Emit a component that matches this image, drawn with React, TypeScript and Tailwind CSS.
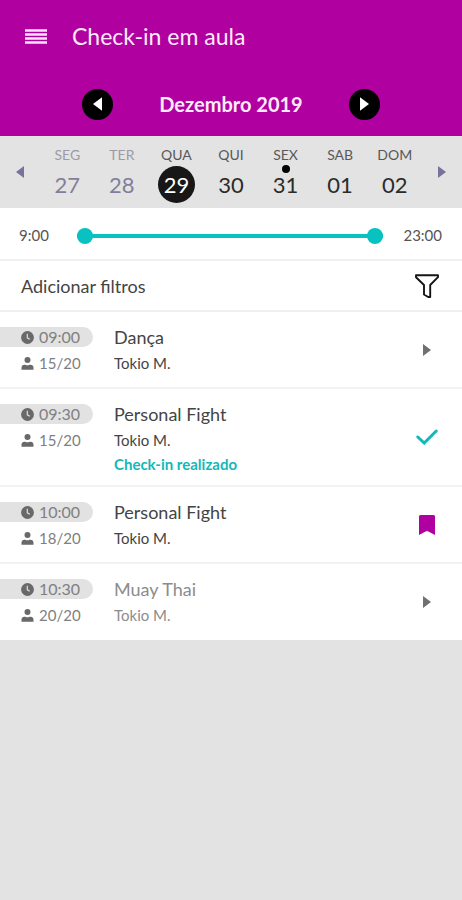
import React, { useState } from 'react';
import { clsx } from 'clsx';

type Status = 'open' | 'done' | 'saved' | 'full';

interface Aula {
    hora: string;
    vagas: string;
    nome: string;
    professor: string;
    status: Status;
}

const DIAS = [
    { nome: 'SEG', numero: '27', passado: true },
    { nome: 'TER', numero: '28', passado: true },
    { nome: 'QUA', numero: '29' },
    { nome: 'QUI', numero: '30' },
    { nome: 'SEX', numero: '31', marcado: true },
    { nome: 'SAB', numero: '01' },
    { nome: 'DOM', numero: '02' },
];

const AULAS: Aula[] = [
    { hora: '09:00', vagas: '15/20', nome: 'Dança', professor: 'Tokio M.', status: 'open' },
    { hora: '09:30', vagas: '15/20', nome: 'Personal Fight', professor: 'Tokio M.', status: 'done' },
    { hora: '10:00', vagas: '18/20', nome: 'Personal Fight', professor: 'Tokio M.', status: 'saved' },
    { hora: '10:30', vagas: '20/20', nome: 'Muay Thai', professor: 'Tokio M.', status: 'full' },
];

const Triangle: React.FC<{ left?: boolean; large?: boolean }> = ({ left = false, large = false }) => (
    <svg viewBox="0 0 8 12" className={clsx('fill-current', large ? 'w-[9px] h-[14px]' : 'w-2 h-3')} aria-hidden="true">
        <path d={left ? 'M8 0v12L0 6z' : 'M0 0v12l8-6z'} />
    </svg>
);

const MenuIcon = () => (
    <svg viewBox="0 0 22 15" className="w-[22px] h-[15px] fill-[#fbe6f9]" aria-hidden="true">
        <path d="M0 .2h22v2.5H0zM0 4.2h22v2.5H0zM0 8.2h22v2.5H0zM0 12.2h22v2.5H0z" />
    </svg>
);

const FunnelIcon = () => (
    <svg viewBox="0 0 24 24" className="w-6 h-6" fill="none" stroke="#151515" strokeWidth="1.9" strokeLinejoin="round" aria-hidden="true">
        <path d="M1 1.2h22v2L15.2 11v12h-2L9 20.5V11L1 3.2z" />
    </svg>
);

const ClockIcon = () => (
    <svg viewBox="0 0 13 13" className="w-[13px] h-[13px]" aria-hidden="true">
        <circle cx="6.5" cy="6.5" r="6.4" fill="#696969" />
        <path d="M6.3 2.8v4l2.5 1.5" fill="none" stroke="#dedede" strokeWidth="1.2" />
    </svg>
);

const PersonIcon = () => (
    <svg viewBox="0 0 13 13" className="w-[13px] h-[13px] fill-[#696969]" aria-hidden="true">
        <circle cx="6.5" cy="3.1" r="3" />
        <path d="M.5 12.7v-2c0-1.800 1.200-3 3-3h.8q2.200 1 4.400 0h.8c1.800 0 3 1.200 3 3v2z" />
    </svg>
);

const CheckIcon = () => (
    <svg viewBox="0 0 22 16" className="w-[22px] h-4" fill="none" stroke="#13b8bb" strokeWidth="3" strokeLinecap="round" aria-hidden="true">
        <path d="M1.8 8l6.400 6L20.200 2" />
    </svg>
);

const BookmarkIcon = () => (
    <svg viewBox="0 0 16 20" className="w-4 h-5 fill-[#b000a0]" aria-hidden="true">
        <path d="M1.5 0h13Q16 0 16 1.5V20l-6.600-3.600q-1.400-.7-2.800 0L0 20V1.500Q0 0 1.500 0z" />
    </svg>
);

const thumb =
    'absolute inset-0 w-full h-4 appearance-none bg-transparent pointer-events-none [&::-webkit-slider-thumb]:appearance-none [&::-webkit-slider-thumb]:pointer-events-auto [&::-webkit-slider-thumb]:w-4 [&::-webkit-slider-thumb]:h-4 [&::-webkit-slider-thumb]:rounded-full [&::-webkit-slider-thumb]:bg-[#08c1c1]';

const HourRange = () => {
    const [range, setRange] = useState([9, 23]);
    const [start, end] = range;

    return (
        <section className="h-[53px] pt-1 flex items-center pl-[19px] pr-5 border-b-2 border-[#efefef] text-[15px] text-[#555555]">
            <span className="w-[58px]">{start}:00</span>
            <div className="relative flex-1 h-4">
                <div
                    className="absolute top-[6px] h-1 bg-[#08c1c1]"
                    style={{ left: `${((start - 9) / 14) * 100}%`, right: `${((23 - end) / 14) * 100}%` }}
                />
                <input type="range" min={9} max={23} value={start} aria-label="Horário inicial" className={thumb}
                    onChange={e => setRange([Math.min(+e.target.value, end - 1), end])} />
                <input type="range" min={9} max={23} value={end} aria-label="Horário final" className={thumb}
                    onChange={e => setRange([start, Math.max(+e.target.value, start + 1)])} />
            </div>
            <span className="w-[59px] text-right">{end}:00</span>
        </section>
    );
};

const AulaRow: React.FC<{ aula: Aula }> = ({ aula }) => {
    const full = aula.status === 'full';
    return (
        <li className="flex min-h-[77px] border-b-2 border-[#f2f2f2] last:min-h-[76px] last:border-b-0">
            <div className="w-[93px] pt-[15px] shrink-0 leading-5 text-[#808080]">
                <div className="h-5 pl-[21px] flex items-center gap-[5px] rounded-r-full bg-[#e2e2e2] text-base">
                    <ClockIcon />
                    {aula.hora}
                </div>
                <div className="h-5 mt-[6px] pl-[21px] flex items-center gap-[5px] text-[15px]">
                    <PersonIcon />
                    {aula.vagas}
                </div>
            </div>
            <div className="flex-1 pl-[21px] pt-[15px] pb-[11px]">
                <h2 className={clsx('text-lg leading-5', full ? 'text-[#8c8c8c]' : 'text-[#444444]')}>{aula.nome}</h2>
                <p className={clsx('mt-[6px] text-[15px] leading-5', full ? 'text-[#8c8c8c]' : 'text-[#444444]')}>{aula.professor}</p>
                {aula.status === 'done' && (
                    <p className="mt-1 text-[15px] leading-5 font-bold text-[#13b8bb]">Check-in realizado</p>
                )}
            </div>
            <button type="button" aria-label={`Abrir ${aula.nome}`} className="w-[70px] flex items-center justify-center text-[#707070]">
                {aula.status === 'done' && <CheckIcon />}
                {aula.status === 'saved' && <BookmarkIcon />}
                {(aula.status === 'open' || full) && <Triangle />}
            </button>
        </li>
    );
};

export default function App() {
    const [selected, setSelected] = useState('29');

    return (
        <div className="min-h-screen bg-[#e3e3e3] font-['Lato',sans-serif]">
            <header className="pb-px bg-[#b000a0] text-[#fdeafb]">
                <div className="h-[73px] flex items-center gap-[25px] pl-[25px]">
                    <button type="button" aria-label="Menu"><MenuIcon /></button>
                    <h1 className="text-[23px]">Check-in em aula</h1>
                </div>
                <div className="h-[62px] w-[298px] mx-auto flex items-center justify-between">
                    <button type="button" aria-label="Mês anterior" className="w-[31px] h-[31px] rounded-full bg-black text-white flex items-center justify-center">
                        <Triangle left large />
                    </button>
                    <p className="text-xl font-bold">Dezembro 2019</p>
                    <button type="button" aria-label="Próximo mês" className="w-[31px] h-[31px] rounded-full bg-black text-white flex items-center justify-center">
                        <Triangle large />
                    </button>
                </div>
            </header>

            <nav className="h-[72px] flex bg-[#e3e3e3] text-[#77739a]">
                <button type="button" aria-label="Semana anterior" className="w-10 flex items-center justify-center">
                    <Triangle left />
                </button>
                <div className="flex-1 grid grid-cols-7">
                    {DIAS.map(dia => (
                        <button
                            key={dia.numero}
                            type="button"
                            onClick={() => setSelected(dia.numero)}
                            className="relative flex flex-col items-center pt-[11px]"
                        >
                            <span className={clsx('text-sm leading-4', dia.passado ? 'text-[#9c9aa6]' : 'text-[#585858]')}>{dia.nome}</span>
                            {dia.marcado && <span className="absolute top-[29px] w-2 h-2 rounded-full bg-black" />}
                            <span
                                className={clsx(
                                    'mt-[3px] w-[37px] h-[37px] rounded-full flex items-center justify-center text-[22px]',
                                    selected === dia.numero ? 'bg-[#171717] text-white' : dia.passado ? 'text-[#817e9c]' : 'text-[#2b2b2b]'
                                )}
                            >
                                {dia.numero}
                            </span>
                        </button>
                    ))}
                </div>
                <button type="button" aria-label="Próxima semana" className="w-10 flex items-center justify-center">
                    <Triangle />
                </button>
            </nav>

            <main className="bg-white">
                <HourRange />
                <button type="button" className="w-full h-[51px] flex items-center justify-between pl-[21px] pr-[23px] border-b-2 border-[#efefef] text-lg text-[#444444]">
                    Adicionar filtros
                    <FunnelIcon />
                </button>
                <ul>
                    {AULAS.map(aula => <AulaRow key={aula.hora} aula={aula} />)}
                </ul>
            </main>
        </div>
    );
}
